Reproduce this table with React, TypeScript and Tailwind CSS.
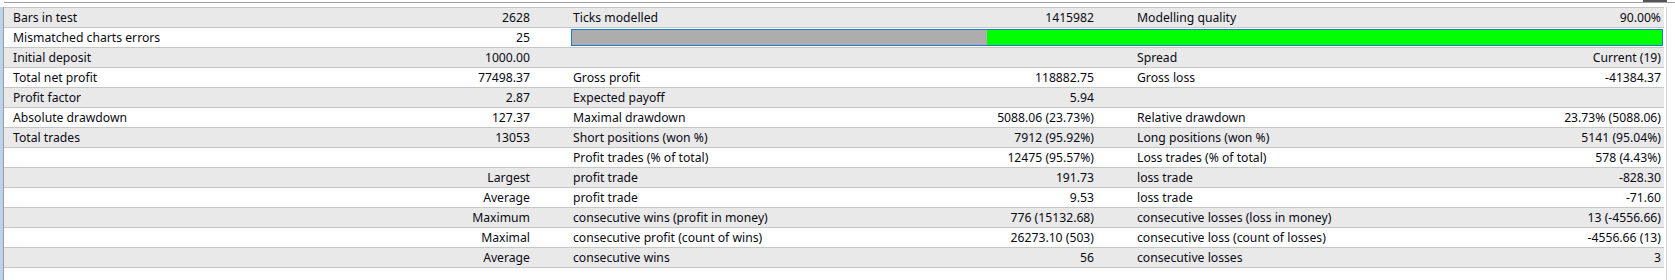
import React from "react";

type Row = {
  l1?: string;
  v1?: string;
  l2?: string;
  v2?: string;
  l3?: string;
  v3?: string;
  bar?: boolean;
};

const ROWS: Row[] = [
  { l1: "Bars in test", v1: "2628", l2: "Ticks modelled", v2: "1415982", l3: "Modelling quality", v3: "90.00%" },
  { l1: "Mismatched charts errors", v1: "25", bar: true },
  { l1: "Initial deposit", v1: "1000.00", l3: "Spread", v3: "Current (19)" },
  { l1: "Total net profit", v1: "77498.37", l2: "Gross profit", v2: "118882.75", l3: "Gross loss", v3: "-41384.37" },
  { l1: "Profit factor", v1: "2.87", l2: "Expected payoff", v2: "5.94" },
  { l1: "Absolute drawdown", v1: "127.37", l2: "Maximal drawdown", v2: "5088.06 (23.73%)", l3: "Relative drawdown", v3: "23.73% (5088.06)" },
  { l1: "Total trades", v1: "13053", l2: "Short positions (won %)", v2: "7912 (95.92%)", l3: "Long positions (won %)", v3: "5141 (95.04%)" },
  { l2: "Profit trades (% of total)", v2: "12475 (95.57%)", l3: "Loss trades (% of total)", v3: "578 (4.43%)" },
  { v1: "Largest", l2: "profit trade", v2: "191.73", l3: "loss trade", v3: "-828.30" },
  { v1: "Average", l2: "profit trade", v2: "9.53", l3: "loss trade", v3: "-71.60" },
  { v1: "Maximum", l2: "consecutive wins (profit in money)", v2: "776 (15132.68)", l3: "consecutive losses (loss in money)", v3: "13 (-4556.66)" },
  { v1: "Maximal", l2: "consecutive profit (count of wins)", v2: "26273.10 (503)", l3: "consecutive loss (count of losses)", v3: "-4556.66 (13)" },
  { v1: "Average", l2: "consecutive wins", v2: "56", l3: "consecutive losses", v3: "3" },
];

function Cell({ label, value, className }: { label?: string; value?: string; className: string }) {
  return (
    <div className={`flex items-center justify-between whitespace-nowrap ${className}`}>
      <span>{label}</span>
      <span>{value}</span>
    </div>
  );
}

export default function App() {
  return (
    <div
      className="flex h-[280px] w-[1675px] overflow-hidden bg-white text-[12.2px] leading-none text-[#0a0a14]"
      style={{ fontFamily: '"Noto Sans", "Open Sans", sans-serif' }}
    >
      {/* left window edge */}
      <div className="flex w-[4px] flex-col">
        <div className="h-[7px] bg-white" />
        <div className="flex flex-1">
          <div className="w-[3px] bg-[#bcd3ec]" />
          <div className="w-px bg-[#9a9a9a]" />
        </div>
      </div>

      <div className="flex flex-1 flex-col">
        {/* top chrome */}
        <div className="flex h-[7px] flex-col">
          <div className="flex h-[2px]">
            <div className="flex-1" />
            <div className="mr-[8px] w-[24px] bg-[#555]" />
          </div>
          <div className="h-px bg-[#a0a0a0]" />
        </div>

        <div className="flex flex-1">
          <div className="flex w-[1660px] flex-col border-t border-[#c6c6c6]">
            {ROWS.map((r, i) => (
              <div
                key={i}
                className={`flex h-[20px] border-b border-[#c6c6c6] pt-px ${i % 2 === 0 ? "bg-[#e9e9e9]" : "bg-white"}`}
              >
                <Cell label={r.l1} value={r.v1} className="w-[561px] pl-[9px] pr-[35px]" />
                {r.bar ? (
                  <div className="-mt-px flex flex-1 items-center pl-[6px] pr-px">
                    <div className="flex h-[17px] flex-1 border border-[#1a7ad4]">
                      <div className="w-[415px] bg-[#adadad]" />
                      <div className="flex-1 bg-[#00ff00]" />
                    </div>
                  </div>
                ) : (
                  <>
                    <Cell label={r.l2} value={r.v2} className="w-[564px] pl-2 pr-[35px]" />
                    <Cell label={r.l3} value={r.v3} className="w-[535px] pl-2 pr-[3px]" />
                  </>
                )}
              </div>
            ))}
          </div>
          <div className="w-[2px]" />
          <div className="w-px bg-[#d0d0d0]" />
          <div className="flex-1 bg-white" />
        </div>
      </div>
    </div>
  );
}
